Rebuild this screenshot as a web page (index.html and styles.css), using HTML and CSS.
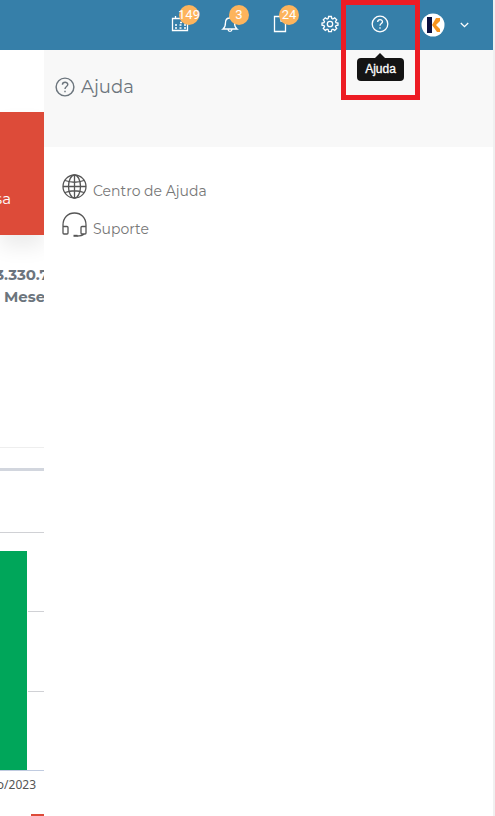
FILE: index.html
```html
<!DOCTYPE html>
<html lang="pt-BR">
<head>
  <meta charset="UTF-8">
  <meta name="viewport" content="width=device-width, initial-scale=1.0">
  <title>Ajuda</title>
  <link rel="stylesheet" href="styles.css">
</head>
<body>
  <header class="topbar">
    <button class="nav-btn" type="button" aria-label="Agenda">
      <svg class="icon" width="18" height="18" viewBox="0 0 18 18">
        <path d="M1.500 3.500h15v12h-15zM4.500 1v3"/>
        <path d="M9 7.500h2M13 7.500h2M4 10h2M8.500 10h2M13 10h2M4 13h2M8.500 13h2M13 13h2" stroke-width="1.700"/>
      </svg>
      <span class="badge">149</span>
    </button>
    <button class="nav-btn" type="button" aria-label="Notificações">
      <svg class="icon" width="18" height="18" viewBox="0 0 18 18">
        <path d="M2 14h14c-2-1.500-2.500-3-2.500-6.500C13.500 4.500 11.500 3 9 3S4.500 4.500 4.500 7.500C4.500 11 4 12.500 2 14zM7 14.500c.3 2.500 3.700 2.500 4 0M9 1v2"/>
      </svg>
      <span class="badge">3</span>
    </button>
    <button class="nav-btn" type="button" aria-label="Documentos">
      <svg class="icon" width="18" height="18" viewBox="0 0 18 18">
        <path d="M3.500 1.500h7l4 4v11h-11zM10 1.500V6h4.500"/>
      </svg>
      <span class="badge">24</span>
    </button>
    <button class="nav-btn" type="button" aria-label="Configurações">
      <svg class="icon" width="18" height="18" viewBox="0 0 18 18">
        <path d="M7.600 1.500h2.800l.4 2 1.100.5 1.800-1.200 2 2-1.200 1.800.5 1.100 2 .4v2l-2 .4-.5 1.100 1.200 1.800-2 2-1.800-1.200-1.100.5-.4 2H7.600l-.4-2-1.100-.5-1.800 1.200-2-2 1.200-1.800-.5-1.100-2-.4v-2l2-.4.5-1.100-1.200-1.800 2-2L6.100 4l1.100-.5z"/>
        <circle cx="9" cy="9" r="2.700"/>
      </svg>
    </button>
    <button class="nav-btn nav-help" type="button" aria-label="Ajuda" aria-describedby="help-tip">
      <svg class="icon" width="18" height="18" viewBox="0 0 18 18">
        <circle cx="9" cy="9" r="7.800"/>
        <path d="M6.700 7c0-3 4.800-3 4.800-.2C11.500 8.600 9 8.500 9 10.700M9 12.300v1.400"/>
      </svg>
      <span class="tooltip" id="help-tip" role="tooltip">Ajuda</span>
      <span class="highlight"></span>
    </button>
    <button class="user-btn" type="button" aria-label="Conta">
      <svg class="avatar" width="24" height="24" viewBox="0 0 24 24">
        <circle cx="12" cy="12" r="11.500" fill="#fff"/>
        <path d="M6 4h5v16H6z" fill="#0b1040"/>
        <path d="M15 5h4v3l-4 4 4 4v3h-3l-5-7z" fill="#f7931e"/>
      </svg>
      <svg class="icon" width="9" height="6" viewBox="0 0 9 6"><path d="M.8 1l3.700 3.700L8.200 1"/></svg>
    </button>
  </header>

  <div class="layout">
    <main class="dashboard">
      <section class="card">sa</section>
      <section class="summary">
        <strong>3.330.7</strong>
        <strong class="months">Mese</strong>
      </section>
      <hr class="rule">
      <section class="chart">
        <svg class="plot" width="44" height="239" viewBox="0 0 44 239">
          <path d="M0 .5h44M0 79.500h44M0 159.500h44" stroke="#d0d1d5"/>
          <path d="M0 19h28v220H0z" fill="#fff"/>
          <path d="M0 19h27v219H0z" fill="#00a65a"/>
          <path d="M0 238.500h44" stroke="#c0cbe0"/>
        </svg>
        <p class="axis-label">o/2023</p>
        <span class="legend"></span>
      </section>
    </main>

    <aside class="panel">
      <div class="panel-head">
        <svg class="icon" width="20" height="20" viewBox="0 0 18 18">
          <circle cx="9" cy="9" r="8"/>
          <path d="M6.700 7c0-3 4.800-3 4.800-.2C11.500 8.600 9 8.500 9 10.700M9 12.300v1.400"/>
        </svg>
        <h1>Ajuda</h1>
      </div>
      <nav class="links">
        <a href="#centro">
          <svg class="icon" width="25" height="25" viewBox="0 0 25 25">
            <circle cx="12.500" cy="12.500" r="11.500"/>
            <ellipse cx="12.500" cy="12.500" rx="6" ry="11.500"/>
            <path d="M12.500 1v23M1 12.500h23M3 6.500c5.500 2 13.500 2 19 0M3 18.500c5.500-2 13.500-2 19 0"/>
          </svg>
          <span>Centro de Ajuda</span>
        </a>
        <a href="#suporte">
          <svg class="icon" width="25" height="25" viewBox="0 0 25 25">
            <path d="M1 15v-2C1 5.500 6 1 12.500 1S24 5.500 24 13v2M1 14.500h4c.7 0 1 .3 1 1V21c0 .7-.3 1-1 1H2c-.7 0-1-.3-1-1zM24 14.500h-4c-.7 0-1 .3-1 1V21c0 .7.3 1 1 1h3c.7 0 1-.3 1-1zM22 22c-1.500 1.500-4 2-7 2"/>
            <path d="M11.500 23.800h4" stroke-width="2"/>
          </svg>
          <span>Suporte</span>
        </a>
      </nav>
    </aside>
  </div>
</body>
</html>
```
FILE: styles.css
```css
* {
  box-sizing: border-box;
}

body {
  margin: 0;
  min-height: 100vh;
  display: flex;
  flex-direction: column;
  border-right: 2px solid #f0f0f0;
  background: #fff;
  color: #6c757d;
  font-family: Montserrat, Inter, sans-serif;
  overflow-x: hidden;
}

button {
  border: 0;
  padding: 0;
  background: none;
  color: inherit;
  cursor: pointer;
}

.icon {
  fill: none;
  stroke: currentColor;
  stroke-width: 1.3;
}

.topbar {
  height: 50px;
  display: flex;
  justify-content: flex-end;
  background: #367fa9;
  color: #fff;
}

.nav-btn {
  position: relative;
  width: 50px;
  display: flex;
  align-items: center;
  justify-content: center;
}

.nav-btn .icon {
  margin-bottom: 2px;
}

.badge {
  position: absolute;
  top: 5px;
  left: 24px;
  width: 20px;
  height: 20px;
  display: flex;
  align-items: center;
  justify-content: center;
  border-radius: 50%;
  background: #fdb45c;
  font: 13px/20px Roboto, sans-serif;
}

.tooltip {
  position: absolute;
  top: 58px;
  left: 2px;
  z-index: 2;
  width: 47px;
  border-radius: 4px;
  background: #141414;
  font: 500 12px/23px "Liberation Sans", Arial, sans-serif;
  -webkit-text-stroke: 0.3px #fff;
}

.tooltip::before {
  content: "";
  position: absolute;
  top: -5px;
  left: 18px;
  border: 5px solid transparent;
  border-top: 0;
  border-bottom-color: #141414;
}

.highlight {
  position: absolute;
  top: 0;
  left: -14px;
  z-index: 3;
  width: 79px;
  height: 100px;
  border: 5px solid #ed1c24;
}

.user-btn {
  display: flex;
  align-items: center;
  gap: 15px;
  padding: 0 24px 0 16px;
}

.layout {
  flex: 1;
  display: grid;
  grid-template-columns: 44px 1fr;
}

.dashboard {
  min-width: 0;
  overflow: hidden;
  padding-top: 62px;
}

.card {
  height: 123px;
  padding: 77px 33px 0 0;
  display: flex;
  justify-content: flex-end;
  background: #dd4b39;
  box-shadow: 0 12px 20px rgba(0, 0, 0, 0.08);
  color: #fff;
  font-size: 15px;
  line-height: 20px;
}

.summary {
  height: 213px;
  padding-top: 29px;
  display: flex;
  flex-direction: column;
  align-items: center;
  border-bottom: 1px solid #eee;
  font-size: 15px;
  line-height: 22px;
}

.summary strong {
  font-weight: 700;
}

.months {
  align-self: flex-start;
  padding-left: 4px;
}

.rule {
  height: 3px;
  margin: 20px 0 61px;
  border: 0;
  background: #d2d6de;
}

.plot {
  display: block;
}

.axis-label {
  margin: 6px 8px 0 0;
  display: flex;
  justify-content: flex-end;
  color: #555;
  font: 12px/16px "Noto Sans", sans-serif;
}

.legend {
  display: block;
  width: 13px;
  height: 2px;
  margin: 21px 0 0 auto;
  background: #dd4b39;
}

.panel {
  background: #fff;
}

.panel-head {
  height: 97px;
  padding: 0 11px 24px;
  display: flex;
  align-items: center;
  gap: 6px;
  background: #f8f8f8;
}

.panel-head h1 {
  margin: 0;
  font-size: 18px;
  font-weight: 400;
  line-height: 24px;
}

.links {
  padding: 27px 18px;
  display: flex;
  flex-direction: column;
  gap: 12px;
  color: #555;
}

.links a {
  display: flex;
  align-items: flex-start;
  gap: 6px;
  color: inherit;
  text-decoration: none;
}

.links span {
  padding-top: 8px;
  color: #777;
  font-size: 14px;
  line-height: 18px;
}
```
